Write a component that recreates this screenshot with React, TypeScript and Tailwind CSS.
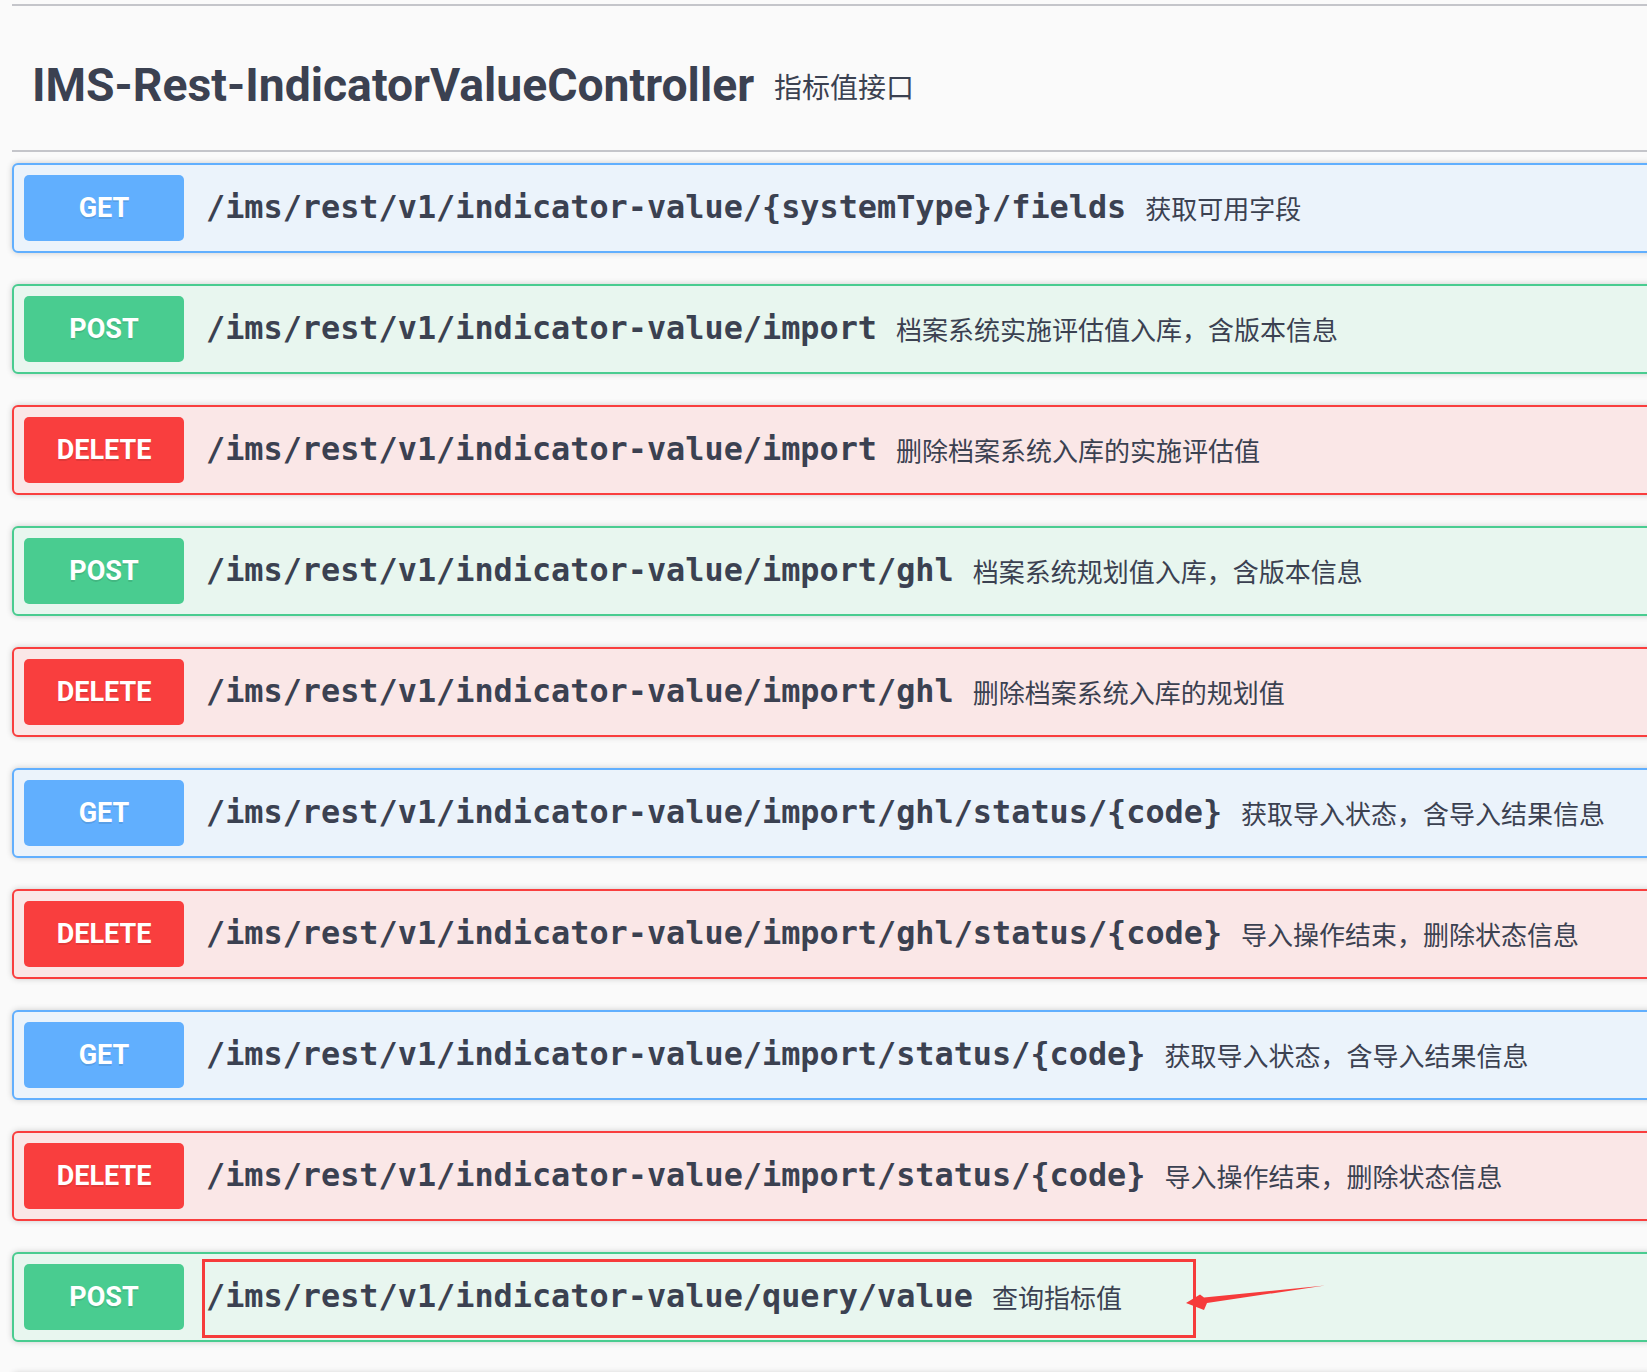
const ops = [
  { method: 'GET', path: '/ims/rest/v1/indicator-value/{systemType}/fields', desc: '获取可用字段' },
  { method: 'POST', path: '/ims/rest/v1/indicator-value/import', desc: '档案系统实施评估值入库，含版本信息' },
  { method: 'DELETE', path: '/ims/rest/v1/indicator-value/import', desc: '删除档案系统入库的实施评估值' },
  { method: 'POST', path: '/ims/rest/v1/indicator-value/import/ghl', desc: '档案系统规划值入库，含版本信息' },
  { method: 'DELETE', path: '/ims/rest/v1/indicator-value/import/ghl', desc: '删除档案系统入库的规划值' },
  { method: 'GET', path: '/ims/rest/v1/indicator-value/import/ghl/status/{code}', desc: '获取导入状态，含导入结果信息' },
  { method: 'DELETE', path: '/ims/rest/v1/indicator-value/import/ghl/status/{code}', desc: '导入操作结束，删除状态信息' },
  { method: 'GET', path: '/ims/rest/v1/indicator-value/import/status/{code}', desc: '获取导入状态，含导入结果信息' },
  { method: 'DELETE', path: '/ims/rest/v1/indicator-value/import/status/{code}', desc: '导入操作结束，删除状态信息' },
  { method: 'POST', path: '/ims/rest/v1/indicator-value/query/value', desc: '查询指标值' },
];

const styles: Record<string, { box: string; badge: string }> = {
  GET: { box: 'border-[#61affe] bg-[#ebf3fb]', badge: 'bg-[#61affe]' },
  POST: { box: 'border-[#49cc90] bg-[#e8f6ef]', badge: 'bg-[#49cc90]' },
  DELETE: { box: 'border-[#f93e3e] bg-[#fae7e7]', badge: 'bg-[#f93e3e]' },
};

const cjk = "font-['Noto_Sans_CJK_SC','Noto_Sans',sans-serif]";

function OpBlock({ method, path, desc }: { method: string; path: string; desc: string }) {
  const s = styles[method];
  return (
    <div
      className={`flex items-center h-[90px] mb-[31px] border-2 rounded-[6px] px-[10px] shadow-[0_0_6px_rgba(0,0,0,0.19)] ${s.box}`}
    >
      <div
        className={`w-[160px] h-[66px] shrink-0 rounded-[5px] flex items-center justify-center text-white font-bold text-[27px] leading-none font-['Roboto','Liberation_Sans',sans-serif] [text-shadow:0_2px_0_rgba(0,0,0,0.1)] ${s.badge}`}
      >
        {method}
      </div>
      <span className="ml-[22px] text-[31.85px] leading-none font-bold text-[#3b4151] font-['DejaVu_Sans_Mono','Liberation_Mono',monospace] whitespace-nowrap">
        {path}
      </span>
      <span className={`ml-[19px] text-[26px] leading-none text-[#3b4151] whitespace-nowrap ${cjk}`}>{desc}</span>
    </div>
  );
}

export default function App() {
  return (
    <div className="relative w-[1647px] h-[1372px] overflow-hidden bg-[#fafafa]">
      <div className="ml-[12px] w-[1700px]">
        <div className="mt-[4px] h-[2px] bg-[#c4c5ca]" />

        {/* tag header */}
        <div className="h-[146px] pt-[15px] pl-[20px] flex items-center border-b-2 border-[#c4c5ca]">
          <h4 className="text-[46.3px] leading-none font-bold text-[#3b4151] font-['Roboto','Liberation_Sans',sans-serif]">
            IMS-Rest-IndicatorValueController
          </h4>
          <span className={`ml-[20px] text-[28px] leading-none text-[#3b4151] ${cjk}`}>指标值接口</span>
        </div>

        <div className="mt-[11px]">
          {ops.map((op, i) => (
            <OpBlock key={i} {...op} />
          ))}
          {/* next block below the fold, only its shadow peeks in */}
          <div className="h-[90px] border-2 rounded-[6px] border-[#61affe] bg-[#ebf3fb] shadow-[0_0_6px_rgba(0,0,0,0.19)]" />
        </div>
      </div>

      {/* red annotation on the last row */}
      <div className="absolute left-[202px] top-[1259px] w-[994px] h-[79px] border-[3px] border-[#f63b3b]" />
      <svg className="absolute left-0 top-0 pointer-events-none" width="1647" height="1372">
        <polygon
          points="1186,1303 1200,1294.5 1204,1297.5 1325,1285.5 1207,1303 1204,1310"
          fill="#f63b3b"
        />
      </svg>
    </div>
  );
}
